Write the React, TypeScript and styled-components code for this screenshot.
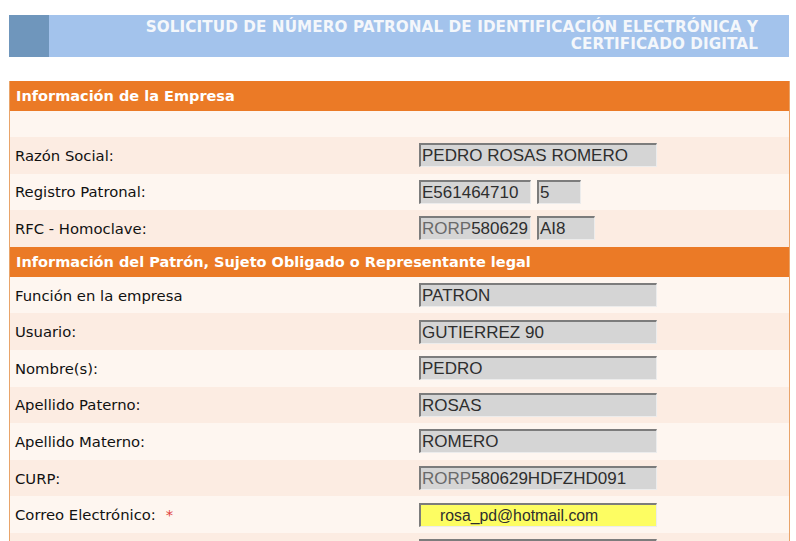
import React from 'react';
import styled, {createGlobalStyle} from "styled-components";

/**
 * Solicitud form: blue title bar and two orange sections
 * with label / read-only field rows.
 */

type Field = {
    value: string
    width?: number
    dim?: number
}

type Row = {
    label: string
    required?: boolean
    fields: Field[]
    highlight?: boolean
}

const empresaRows: Row[] = [
    {label: 'Razón Social:', fields: [{value: 'PEDRO ROSAS ROMERO'}]},
    {label: 'Registro Patronal:', fields: [{value: 'E561464710', width: 112}, {value: '5', width: 44}]},
    {label: 'RFC - Homoclave:', fields: [{value: 'RORP580629', width: 112, dim: 4}, {value: 'AI8', width: 58}]},
]

const patronRows: Row[] = [
    {label: 'Función en la empresa', fields: [{value: 'PATRON'}]},
    {label: 'Usuario:', fields: [{value: 'GUTIERREZ 90'}]},
    {label: 'Nombre(s):', fields: [{value: 'PEDRO'}]},
    {label: 'Apellido Paterno:', fields: [{value: 'ROSAS'}]},
    {label: 'Apellido Materno:', fields: [{value: 'ROMERO'}]},
    {label: 'CURP:', fields: [{value: 'RORP580629HDFZHD091', dim: 4}]},
    {label: 'Correo Electrónico:', required: true, fields: [{value: 'rosa_pd@hotmail.com'}], highlight: true},
    {label: '', fields: [{value: ''}]},
]

function FormRows({rows, startDark}: { rows: Row[], startDark: boolean }) {
    return (
        <>
            {rows.map((row, i) => (
                <FormRow key={i} $dark={(i % 2 === 0) === startDark}>
                    <Label>
                        {row.label}
                        {row.required && <Required>*</Required>}
                    </Label>
                    <Fields>
                        {row.fields.map((f, j) => (
                            <TextBox key={j} $width={f.width} $highlight={row.highlight}>
                                {f.dim ? (
                                    <>
                                        <Dim>{f.value.slice(0, f.dim)}</Dim>
                                        {f.value.slice(f.dim)}
                                    </>
                                ) : f.value}
                            </TextBox>
                        ))}
                    </Fields>
                </FormRow>
            ))}
        </>
    )
}

function App() {
    return (
        <>
            <GlobalStyle/>
            <Page>
                <TitleBar>
                    <TitleBlock/>
                    <Title>
                        SOLICITUD DE NÚMERO PATRONAL DE IDENTIFICACIÓN ELECTRÓNICA Y<br/>
                        CERTIFICADO DIGITAL
                    </Title>
                </TitleBar>

                <Form>
                    <SectionHeader>Información de la Empresa</SectionHeader>
                    <EmptyRow/>
                    <FormRows rows={empresaRows} startDark={true}/>
                    <SectionHeader>Información del Patrón, Sujeto Obligado o Representante legal</SectionHeader>
                    <FormRows rows={patronRows} startDark={false}/>
                </Form>
            </Page>
        </>
    );
}

const GlobalStyle = createGlobalStyle`
  body {
    margin: 0;
    background: #ffffff;
    font-family: "DejaVu Sans", Verdana, sans-serif;
    overflow: hidden;
  }
`

const Page = styled.div`
  padding: 15px 6px 0 9px;
`

const TitleBar = styled.div`
  display: flex;
  height: 42px;
  width: 780px;
  background: #a3c3ec;
`

const TitleBlock = styled.div`
  width: 40px;
  background: #6f96bc;
`

const Title = styled.div`
  flex: 1;
  padding: 4px 31px 0 0;
  text-align: right;
  color: #f4f7fb;
  font-weight: bold;
  font-size: 15.2px;
  letter-spacing: 0.1px;
  line-height: 17px;
`

const Form = styled.div`
  margin-top: 24px;
  width: 779px;
  border-left: 1px solid #e9a46a;
  border-right: 1px solid #e9a46a;
`

const SectionHeader = styled.div`
  display: flex;
  align-items: center;
  height: 30px;
  padding-left: 6px;
  background: #eb7a26;
  color: #ffffff;
  font-weight: bold;
  font-size: 14.5px;
`

const EmptyRow = styled.div`
  height: 26px;
  background: #fef6f0;
`

const FormRow = styled.div<{ $dark: boolean }>`
  display: grid;
  grid-template-columns: 409px 1fr;
  align-items: center;
  height: 36.6px;
  background: ${p => p.$dark ? '#fcece2' : '#fef6f0'};
`

const Label = styled.div`
  padding-left: 5px;
  font-size: 14.8px;
  color: #111111;
`

const Required = styled.span`
  margin-left: 10px;
  color: #e0403a;
`

const Fields = styled.div`
  display: flex;
  gap: 6px;
`

const TextBox = styled.div<{ $width?: number, $highlight?: boolean }>`
  box-sizing: border-box;
  width: ${p => p.$width ?? 238}px;
  height: 24px;
  padding: 0 0 0 ${p => p.$highlight ? 19 : 1}px;
  white-space: pre;
  overflow: hidden;
  background: ${p => p.$highlight ? '#fdfd62' : '#d5d5d5'};
  border-top: 2px solid #7c7c7c;
  border-left: 2px solid #7c7c7c;
  border-bottom: 1px solid #ececec;
  border-right: 1px solid #ececec;
  font-family: "Liberation Sans", Arial, sans-serif;
  font-size: ${p => p.$highlight ? 15.8 : 17}px;
  line-height: 21px;
  color: #2e2e2e;
`

const Dim = styled.span`
  color: #6a6a6a;
`

export default App;
